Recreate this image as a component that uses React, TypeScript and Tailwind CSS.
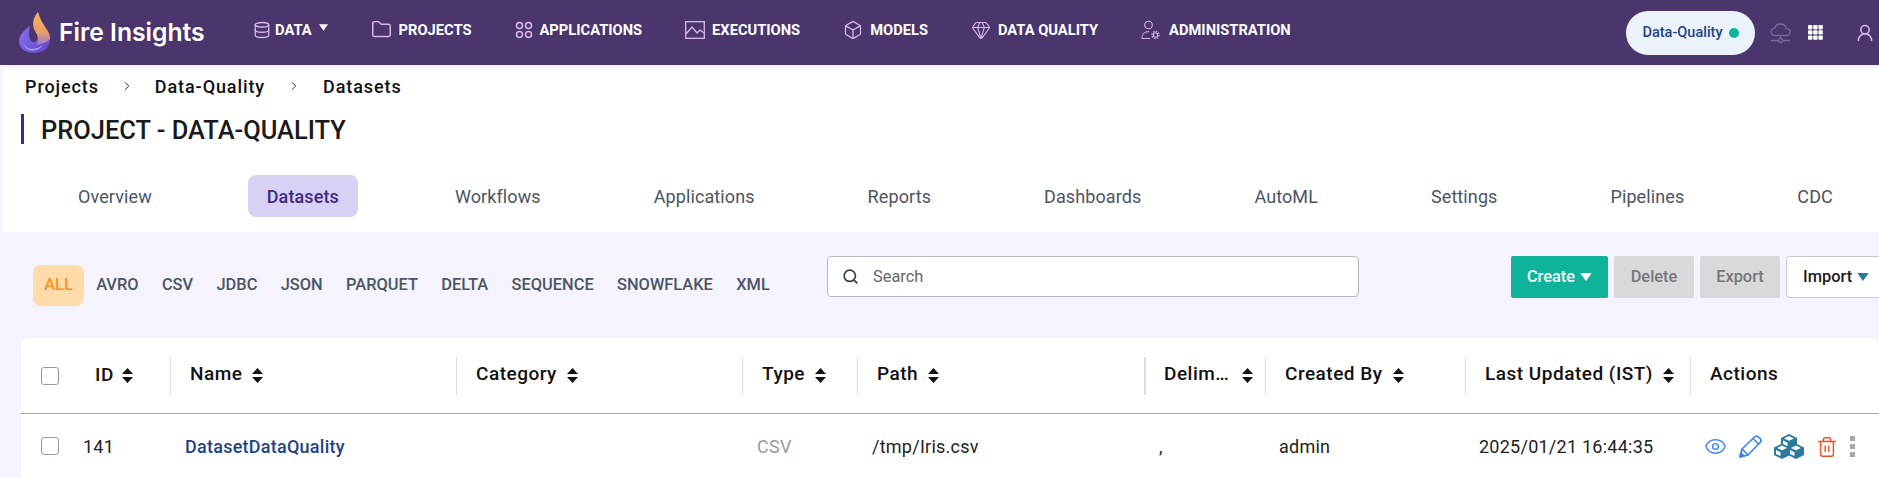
import React from "react";
import { Database, Folder, Box, Gem, Eye, Trash2, Search, ChevronRight, UserRound } from "lucide-react";

const font = { fontFamily: "Roboto, sans-serif" };

function Logo() {
  return (
    <svg width="34" height="42" viewBox="0 0 34 42" className="shrink-0">
      <defs>
        <linearGradient id="fl" x1="0" y1="0" x2="0" y2="1">
          <stop offset="0" stopColor="#f9b24e" />
          <stop offset="0.6" stopColor="#e8a066" />
          <stop offset="1" stopColor="#9a78d8" />
        </linearGradient>
        <linearGradient id="fb" x1="0" y1="0" x2="1" y2="1">
          <stop offset="0" stopColor="#8f7bf0" />
          <stop offset="1" stopColor="#5f44c8" />
        </linearGradient>
      </defs>
      <path d="M12 14 C6 18 1 23 1 29 C1 37 8 41 16 41 C25 41 32 36 32 27 C32 19 24 14 20 0 C16 5 14 11 18 19 C21 24 20 30 16 30 C11 30 10 22 12 14 Z" fill="url(#fb)" />
      <path d="M20 0 C16 5 13 12 17 19 C20 24 21 27 19 33 C27 31 32 29 32 26 C32 18 23 13 20 0 Z" fill="url(#fl)" />
      <path d="M5 30 C8 38 16 39 25 33 C20 41 7 41 5 30 Z" fill="#c3b6f7" opacity="0.7" />
    </svg>
  );
}

const ic = "#dcb8ee";

function Apps() {
  return (
    <svg width="18" height="18" viewBox="0 0 18 18" fill="none" stroke={ic} strokeWidth="1.5">
      <circle cx="4.5" cy="4.5" r="3" /><circle cx="13.5" cy="4.5" r="3" /><circle cx="4.5" cy="13.5" r="3" /><circle cx="13.5" cy="13.5" r="3" />
    </svg>
  );
}
function Exec() {
  return (
    <svg width="20" height="18" viewBox="0 0 20 18" fill="none" stroke={ic} strokeWidth="1.3">
      <rect x="0.7" y="0.7" width="18.6" height="16.6" />
      <path d="M1 13 L7 6 L12 12 L15 9 L19 12" />
    </svg>
  );
}
function Admin() {
  return (
    <svg width="19" height="20" viewBox="0 0 19 20" fill="none" stroke={ic} strokeWidth="1.1">
      <circle cx="7.5" cy="5" r="3.8" />
      <path d="M0.8 18.5 C0.8 14 4 11.5 8 11.5 M0.8 18.5 H9" />
      <circle cx="14.5" cy="15" r="2.2" />
      <circle cx="14.5" cy="15" r="3.6" strokeDasharray="1.6 1.2" />
    </svg>
  );
}
function CloudNet() {
  return (
    <svg width="21" height="20" viewBox="0 0 21 20" fill="none" stroke="#7a6699" strokeWidth="1.3">
      <path d="M5 12.5 C2.5 12.5 1 11 1 8.8 C1 6.6 2.8 5.2 4.6 5.3 C5.4 2.8 7.6 1 10.4 1 C13.4 1 15.8 3 16.3 5.6 C18.5 5.7 20 7.2 20 9 C20 11 18.5 12.5 16.3 12.5 Z" />
      <path d="M10.5 12.5 V15.5 M1 17.5 H8 M13 17.5 H20" />
      <circle cx="10.5" cy="17.5" r="2" />
    </svg>
  );
}
function Caret({ color = "#ffffff", w = 10, h = 7 }: { color?: string; w?: number; h?: number }) {
  return (
    <svg width={w} height={h} viewBox="0 0 10 7" className="shrink-0">
      <path d="M0 0 H10 L5 7 Z" fill={color} />
    </svg>
  );
}
function Sort() {
  return (
    <svg width="11" height="15" viewBox="0 0 11 15" className="shrink-0">
      <path d="M5.5 0 L11 6 H0 Z M5.5 15 L0 9 H11 Z" fill="#111" />
    </svg>
  );
}
function GridDots() {
  return (
    <svg width="15" height="15" viewBox="0 0 15 15" fill="#fff">
      {[0, 5.2, 10.4].map((x) => [0, 5.2, 10.4].map((y) => <rect key={`${x}-${y}`} x={x} y={y} width="4.4" height="4.4" rx="0.8" />))}
    </svg>
  );
}
function Pencil() {
  return (
    <svg width="23" height="23" viewBox="0 0 23 23" fill="none" stroke="#3b82f6" strokeWidth="1.7" strokeLinejoin="round">
      <path d="M1 22 L3 14 L16 1.5 Q17.5 0.5 19 1.5 L21.5 4 Q22.5 5.5 21.5 7 L9 20 Z" />
      <path d="M3 14 L9 20 M14 3.5 L19.5 9" />
      <path d="M1 22 L2 18 L5 21 Z" fill="#3b82f6" />
    </svg>
  );
}
function Cubes() {
  const c = "#2b7a9c";
  const cube = (x: number, y: number, k: string) => (
    <g key={k} transform={`translate(${x} ${y})`}>
      <path d="M8 0 L16 4 V11.5 L8 15.5 L0 11.5 V4 Z" fill={c} />
      <path d="M8 2 L13 4.4 L8 6.8 L3 4.4 Z" fill="#fff" />
      <path d="M2 6.5 L6.5 8.7 V12.6 L2 10.4 Z" fill="#fff" />
    </g>
  );
  return (
    <svg width="30" height="25" viewBox="0 0 30 25">
      {cube(7, 0, "a")}
      {cube(0, 9.5, "b")}
      {cube(14, 9.5, "c")}
    </svg>
  );
}

const navItems: [React.ReactNode, string, string][] = [
  [<Database size={18} color={ic} strokeWidth={1.7} />, "DATA", "gap-[4px]"],
  [<Folder size={21} color={ic} strokeWidth={1.7} />, "PROJECTS", "gap-[7px]"],
  [<Apps />, "APPLICATIONS", "gap-[7px]"],
  [<Exec />, "EXECUTIONS", "gap-[7px]"],
  [<Box size={20} color={ic} strokeWidth={1.5} />, "MODELS", "gap-[7px]"],
  [<Gem size={20} color={ic} strokeWidth={1.3} />, "DATA QUALITY", "gap-[7px]"],
  [<Admin />, "ADMINISTRATION", "gap-[9px]"],
];

const tabs = ["Overview", "Datasets", "Workflows", "Applications", "Reports", "Dashboards", "AutoML", "Settings", "Pipelines", "CDC"];
const filters = ["ALL", "AVRO", "CSV", "JDBC", "JSON", "PARQUET", "DELTA", "SEQUENCE", "SNOWFLAKE", "XML"];
const template = "149px 286px 286px 115px 287px 121px 200px 225px 1fr";

export default function App() {
  return (
    <div className="h-[478px] w-[1879px] overflow-hidden bg-[#f5f3fe] text-[#111]" style={font}>
      <header className="flex h-[65px] items-center bg-[#4a356c] pl-[18px]">
        <div className="flex w-[235px] items-center gap-[7px]">
          <Logo />
          <span className="text-[24.7px] font-semibold text-white" style={{ fontFamily: "Inter, sans-serif" }}>Fire Insights</span>
        </div>
        <nav className="flex items-center gap-[43px] pb-[5px]">
          {navItems.map(([icon, label, gap]) => (
            <div key={label} className={`flex items-center ${gap} text-[14.7px] font-bold text-white`}>
              {icon}
              <span>{label}</span>
              {label === "DATA" && <span className="ml-[3px] -translate-y-[2px]"><Caret w={9} h={7} /></span>}
            </div>
          ))}
        </nav>
        <div className="ml-auto flex items-center">
          <div className="flex h-[44px] w-[129px] items-center justify-center gap-[6px] rounded-full bg-[#ecf2f9] text-[14.5px] font-medium text-[#1e4484]">
            Data-Quality
            <span className="h-[10px] w-[10px] rounded-full bg-[#0eb39a]" />
          </div>
          <div className="ml-[15px]"><CloudNet /></div>
          <div className="ml-[17px]"><GridDots /></div>
          <div className="ml-[32px] mr-[4px]"><UserRound size={20} color={ic} strokeWidth={1.8} /></div>
        </div>
      </header>

      <div className="ml-[3px] mt-[3px] h-[164px] bg-white">
        <div className="flex h-[36px] items-center pl-[22px] text-[18px] font-medium tracking-[0.9px]">
          <span>Projects</span>
          <ChevronRight size={14} className="mx-[21px]" strokeWidth={1.5} />
          <span>Data-Quality</span>
          <ChevronRight size={14} className="mx-[22px]" strokeWidth={1.5} />
          <span>Datasets</span>
        </div>
        <div className="ml-[18px] mt-[10px] flex h-[30px] items-center border-l-[3px] border-[#3d2a86] pl-[17px] text-[25.45px] font-medium text-[#1a1a1a]">
          <span className="translate-y-[1px]">PROJECT - DATA-QUALITY</span>
        </div>
        <div className="mt-[31px] flex items-center gap-[75px] pl-[56px]">
          {tabs.map((t) => (
            <div
              key={t}
              className={
                t === "Datasets"
                  ? "mx-[2px] mr-[3px] flex h-[42px] items-center rounded-[8px] bg-[#d7d2f4] px-[19px] text-[18px] font-medium tracking-[0.1px] text-[#3d2a86]"
                  : "flex h-[42px] items-center px-[19px] text-[18px] tracking-[0.1px] text-[#4b5563]"
              }
            >
              {t}
            </div>
          ))}
        </div>
      </div>

      <div className="mt-[24px] flex h-[42px] items-start pl-[33px]">
        <div className="mt-[9px] flex w-[794px] shrink-0 items-center gap-[1px]">
          {filters.map((f) => (
            <div
              key={f}
              className={
                f === "ALL"
                  ? "flex h-[41px] items-center rounded-[8px] bg-[#fddcaa] px-[11.2px] text-[16.4px] font-medium text-[#f7931e]"
                  : "flex h-[41px] items-center px-[11.2px] text-[16.4px] font-medium text-[#4b5563]"
              }
            >
              {f}
            </div>
          ))}
        </div>
        <div className="flex h-[41px] w-[532px] shrink-0 items-center gap-[14px] rounded-[4px] border border-[#b8b8c0] bg-white pl-[14px] text-[16.4px] text-[#666]">
          <Search size={17} color="#374151" strokeWidth={2.4} />
          <span className="translate-y-[1px]">Search</span>
        </div>
        <div className="ml-[152px] flex shrink-0 items-center gap-[6px] text-[16.4px] font-medium">
          <div className="flex h-[42px] w-[97px] items-center justify-center gap-[5px] rounded-[2px] bg-[#0eb39a] text-white">
            Create <Caret w={12} h={8} />
          </div>
          <div className="flex h-[42px] w-[80px] items-center justify-center rounded-[2px] bg-[#d9d9dc] text-[#777]">Delete</div>
          <div className="flex h-[42px] w-[80px] items-center justify-center rounded-[2px] bg-[#d9d9dc] text-[#777]">Export</div>
          <div className="flex h-[42px] w-[100px] items-center gap-[5px] rounded-[4px] border border-[#c9c9d2] bg-white pl-[16px] text-[#1a1a1a]">
            Import <Caret color="#2b7a9c" w={12} h={8} />
          </div>
        </div>
      </div>

      <div className="ml-[21px] mt-[40px] h-[140px] rounded-t-[8px] bg-white">
        <div className="grid h-[76px] items-center border-b-[1px] border-[#a8a8a8] text-[19px] font-medium tracking-[0.5px]" style={{ gridTemplateColumns: template }}>
          <div className="flex items-center">
            <span className="ml-[20px] h-[18px] w-[18px] rounded-[3px] border border-[#9a9aa5]" />
            <span className="ml-[36px]">ID</span>
            <span className="ml-[8px]"><Sort /></span>
          </div>
          {["Name", "Category", "Type", "Path", "Delim...", "Created By", "Last Updated (IST)", "Actions"].map((h) => (
            <div key={h} className={h === "Delim..." ? "flex h-[38px] items-center border-l-[2px] border-[#dcdcdc] pl-[18px] pr-[12px]" : "flex h-[38px] items-center gap-[10px] border-l border-[#dcdcdc] pl-[19px]"}>
              <span className="-translate-y-[1px]">{h === "Delim..." ? "Delim…" : h}</span>
              {h !== "Actions" && <span className={h === "Delim..." ? "ml-auto" : ""}><Sort /></span>}
            </div>
          ))}
        </div>
        <div className="grid h-[65px] items-center text-[18px] tracking-[0.25px] text-[#222]" style={{ gridTemplateColumns: template }}>
          <div className="flex items-center">
            <span className="ml-[20px] h-[18px] w-[18px] -translate-y-[1px] rounded-[3px] border border-[#9a9aa5]" />
            <span className="ml-[24px]">141</span>
          </div>
          <div className="pl-[15px] font-medium text-[#1e4484]">DatasetDataQuality</div>
          <div />
          <div className="pl-[15px] text-[#9a9a9a]">CSV</div>
          <div className="pl-[15px]">/tmp/Iris.csv</div>
          <div className="pl-[15px]">,</div>
          <div className="pl-[14px]">admin</div>
          <div className="pl-[14px]">2025/01/21 16:44:35</div>
          <div className="flex items-center pl-[14px]">
            <Eye size={23} color="#3b82f6" strokeWidth={1.5} />
            <span className="ml-[12px]"><Pencil /></span>
            <span className="ml-[12px]"><Cubes /></span>
            <Trash2 size={22} color="#f4511e" strokeWidth={1.6} className="ml-[12px]" />
            <div className="ml-[12px] flex flex-col gap-[3px]">
              <span className="h-[5px] w-[5px] bg-[#a8a8a8]" />
              <span className="h-[5px] w-[5px] bg-[#a8a8a8]" />
              <span className="h-[5px] w-[5px] bg-[#a8a8a8]" />
            </div>
          </div>
        </div>
      </div>
    </div>
  );
}
